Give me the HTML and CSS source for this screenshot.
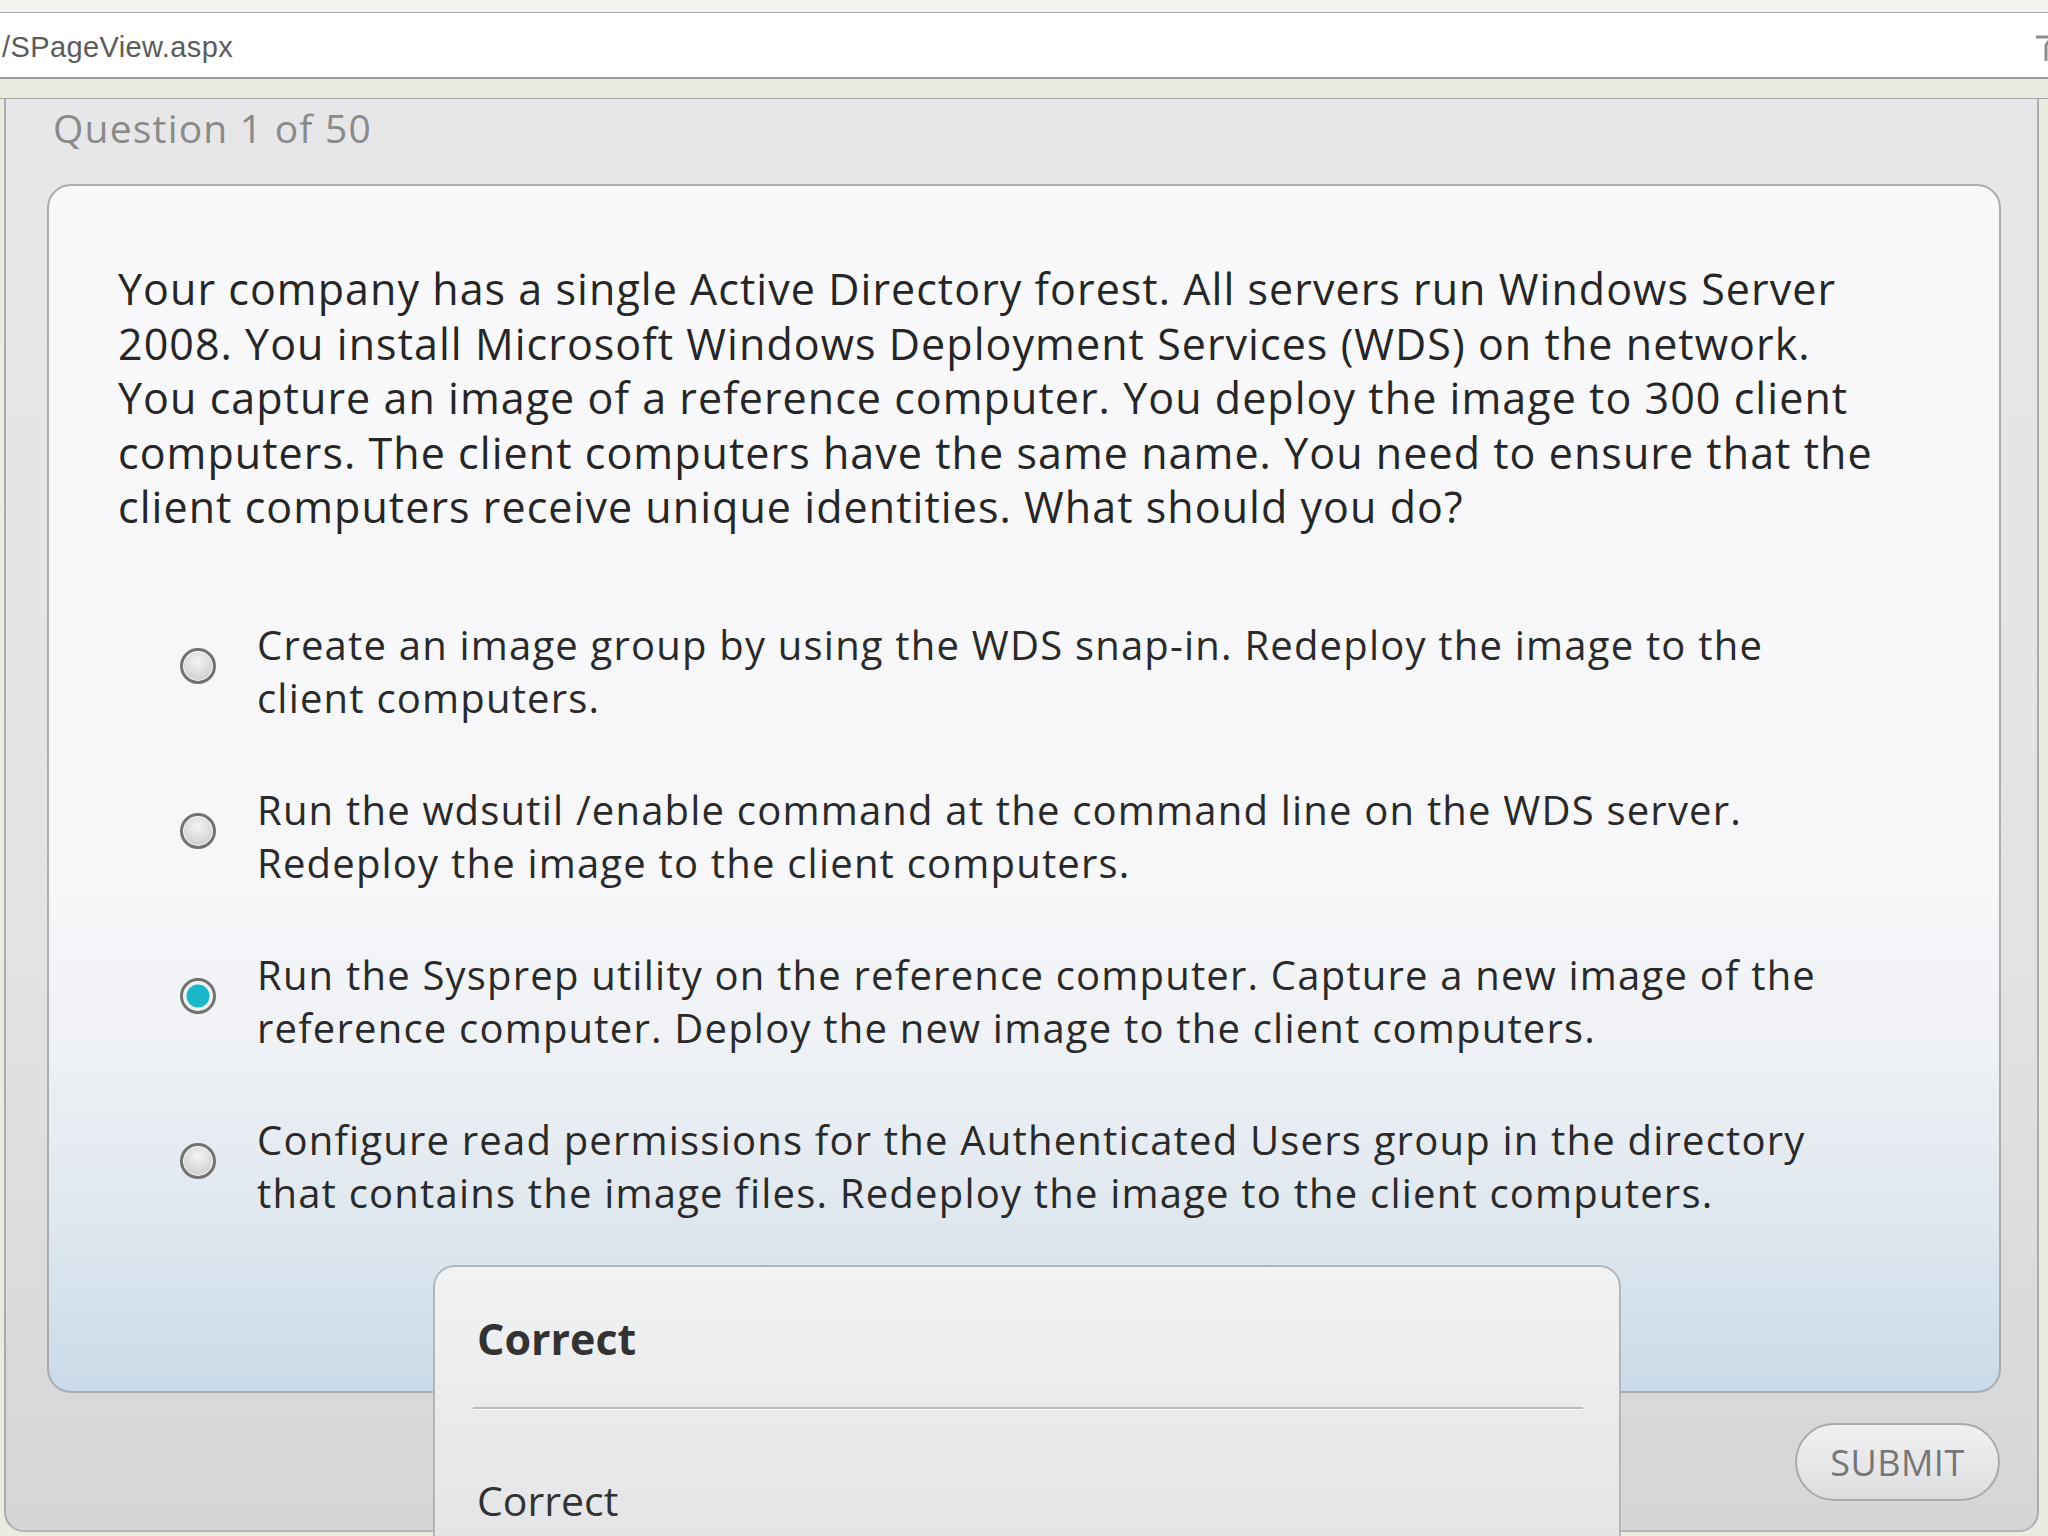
FILE: index.html
```html
<!DOCTYPE html>
<html lang="en">
<head>
<meta charset="utf-8">
<title>Question 1 of 50</title>
<link rel="stylesheet" href="styles.css">
</head>
<body>
<div class="topbar"></div>
<div class="address">
  <span class="url">/SPageView.aspx</span>
  <svg class="addr-icon" width="20" height="30" viewBox="0 0 20 30"><path d="M2 4 L18 4 L12 12 L12 28" fill="none" stroke="#8c8c8c" stroke-width="3"/></svg>
</div>
<div class="strip"></div>
<div class="panel">
  <div class="qlabel">Question 1 of 50</div>
  <div class="card">
    <p class="question">Your company has a single Active Directory forest. All servers run Windows Server<br>2008. You install Microsoft Windows Deployment Services (WDS) on the network.<br>You capture an image of a reference computer. You deploy the image to 300 client<br>computers. The client computers have the same name. You need to ensure that the<br>client computers receive unique identities. What should you do?</p>
    <div class="options">
      <div class="option"><span class="radio"></span><span class="otext">Create an image group by using the WDS snap-in. Redeploy the image to the<br>client computers.</span></div>
      <div class="option"><span class="radio"></span><span class="otext">Run the wdsutil /enable command at the command line on the WDS server.<br>Redeploy the image to the client computers.</span></div>
      <div class="option"><span class="radio checked"></span><span class="otext">Run the Sysprep utility on the reference computer. Capture a new image of the<br>reference computer. Deploy the new image to the client computers.</span></div>
      <div class="option"><span class="radio"></span><span class="otext">Configure read permissions for the Authenticated Users group in the directory<br>that contains the image files. Redeploy the image to the client computers.</span></div>
    </div>
  </div>
  <div class="actions"><button class="submit">SUBMIT</button></div>
  <div class="popup">
    <div class="ptitle">Correct</div>
    <div class="psep"></div>
    <div class="pbody">Correct</div>
  </div>
</div>
</body>
</html>
```
FILE: styles.css
```css
html, body {
  margin: 0;
  padding: 0;
}
body {
  width: 2048px;
  height: 1536px;
  overflow: hidden;
  background: #ecebe2;
  font-family: "Open Sans", "Noto Sans", sans-serif;
  color: #2e2e2e;
}
.topbar {
  height: 12px;
  background: #f4f2ec;
  border-bottom: 1px solid #a8a8a6;
}
.address {
  height: 64px;
  background: #ffffff;
  border-bottom: 2px solid #9c9c9a;
  display: flex;
  align-items: center;
  justify-content: space-between;
  overflow: hidden;
}
.url {
  font-family: "Liberation Sans", Arial, sans-serif;
  font-size: 29px;
  color: #5c5c5c;
  margin-left: 2px;
  margin-top: 4px;
  letter-spacing: 0.4px;
}
.addr-icon {
  margin-right: -6px;
  margin-top: 6px;
}
.strip {
  height: 19px;
  background: #ecebe0;
  border-bottom: 1px solid #a9a9a9;
}
.panel {
  position: relative;
  margin-left: 4px;
  width: 2035px;
  height: 1433px;
  box-sizing: border-box;
  border-left: 2px solid #ababab;
  border-right: 2px solid #ababab;
  border-bottom: 2px solid #b4b4b4;
  border-radius: 0 0 20px 20px;
  background: linear-gradient(to bottom, #e7e7e9 0%, #e3e3e5 60%, #d6d6d8 100%);
  display: flex;
  flex-direction: column;
}
.qlabel {
  font-size: 39px;
  line-height: 48px;
  color: #8a8a8a;
  margin: 5px 0 0 47px;
  letter-spacing: 1.2px;
}
.card {
  margin: 32px 0 0 41px;
  width: 1954px;
  height: 1209px;
  box-sizing: border-box;
  border: 2px solid #a9adb1;
  border-radius: 24px;
  background: linear-gradient(to bottom, #f9f9fb 0%, #f7f7f9 58%, #f0f2f6 70%, #e0e8ef 85%, #cadbe9 100%);
  padding: 76px 0 0 69px;
}
.question {
  margin: 0;
  font-size: 43px;
  line-height: 54.5px;
  letter-spacing: 1.05px;
  white-space: nowrap;
  color: #262626;
}
.options {
  margin-top: 83px;
  display: flex;
  flex-direction: column;
  gap: 59px;
}
.option {
  display: flex;
  align-items: flex-start;
  padding-left: 62px;
}
.radio {
  flex: none;
  width: 36px;
  height: 36px;
  box-sizing: border-box;
  border-radius: 50%;
  border: 3px solid #727272;
  background: radial-gradient(circle at 50% 35%, #f4f4f4 0%, #dadada 55%, #c6c6c6 100%);
  box-shadow: inset 0 0 0 1px #ffffff;
  margin-top: 30px;
}
.radio.checked {
  background: radial-gradient(circle, #1cb8ca 0, #1cb8ca 11px, #eef7f8 12px, #e4e4e4 15px);
}
.otext {
  margin-left: 41px;
  font-size: 40px;
  line-height: 53px;
  letter-spacing: 1.2px;
  white-space: nowrap;
  color: #2a2a2a;
}
.actions {
  display: flex;
  justify-content: flex-end;
  margin: 30px 37px 0 0;
}
.submit {
  width: 205px;
  height: 78px;
  box-sizing: border-box;
  border: 2px solid #aaaaaa;
  border-radius: 39px;
  background: linear-gradient(to bottom, #f0f0f2 0%, #e6e6e8 60%, #dcdcde 100%);
  font-family: "Open Sans", "Noto Sans", sans-serif;
  font-size: 36px;
  color: #767676;
  padding: 0;
  letter-spacing: 0.5px;
}
.popup {
  position: absolute;
  left: 427px;
  top: 1166px;
  width: 1188px;
  height: 320px;
  box-sizing: border-box;
  border: 2px solid #b3b5b7;
  border-radius: 22px 22px 0 0;
  background: linear-gradient(to bottom, #f1f2f4 0%, #e9e9eb 60%, #e3e3e5 100%);
  padding: 45px 36px 0 38px;
}
.ptitle {
  font-size: 43px;
  font-weight: 700;
  line-height: 54px;
  color: #333333;
  padding-left: 4px;
}
.psep {
  margin-top: 41px;
  height: 2px;
  background: #b9b9bb;
  border-bottom: 1px solid #fbfbfb;
}
.pbody {
  margin-top: 63px;
  font-size: 41px;
  line-height: 54px;
  color: #333333;
  padding-left: 4px;
}
```
